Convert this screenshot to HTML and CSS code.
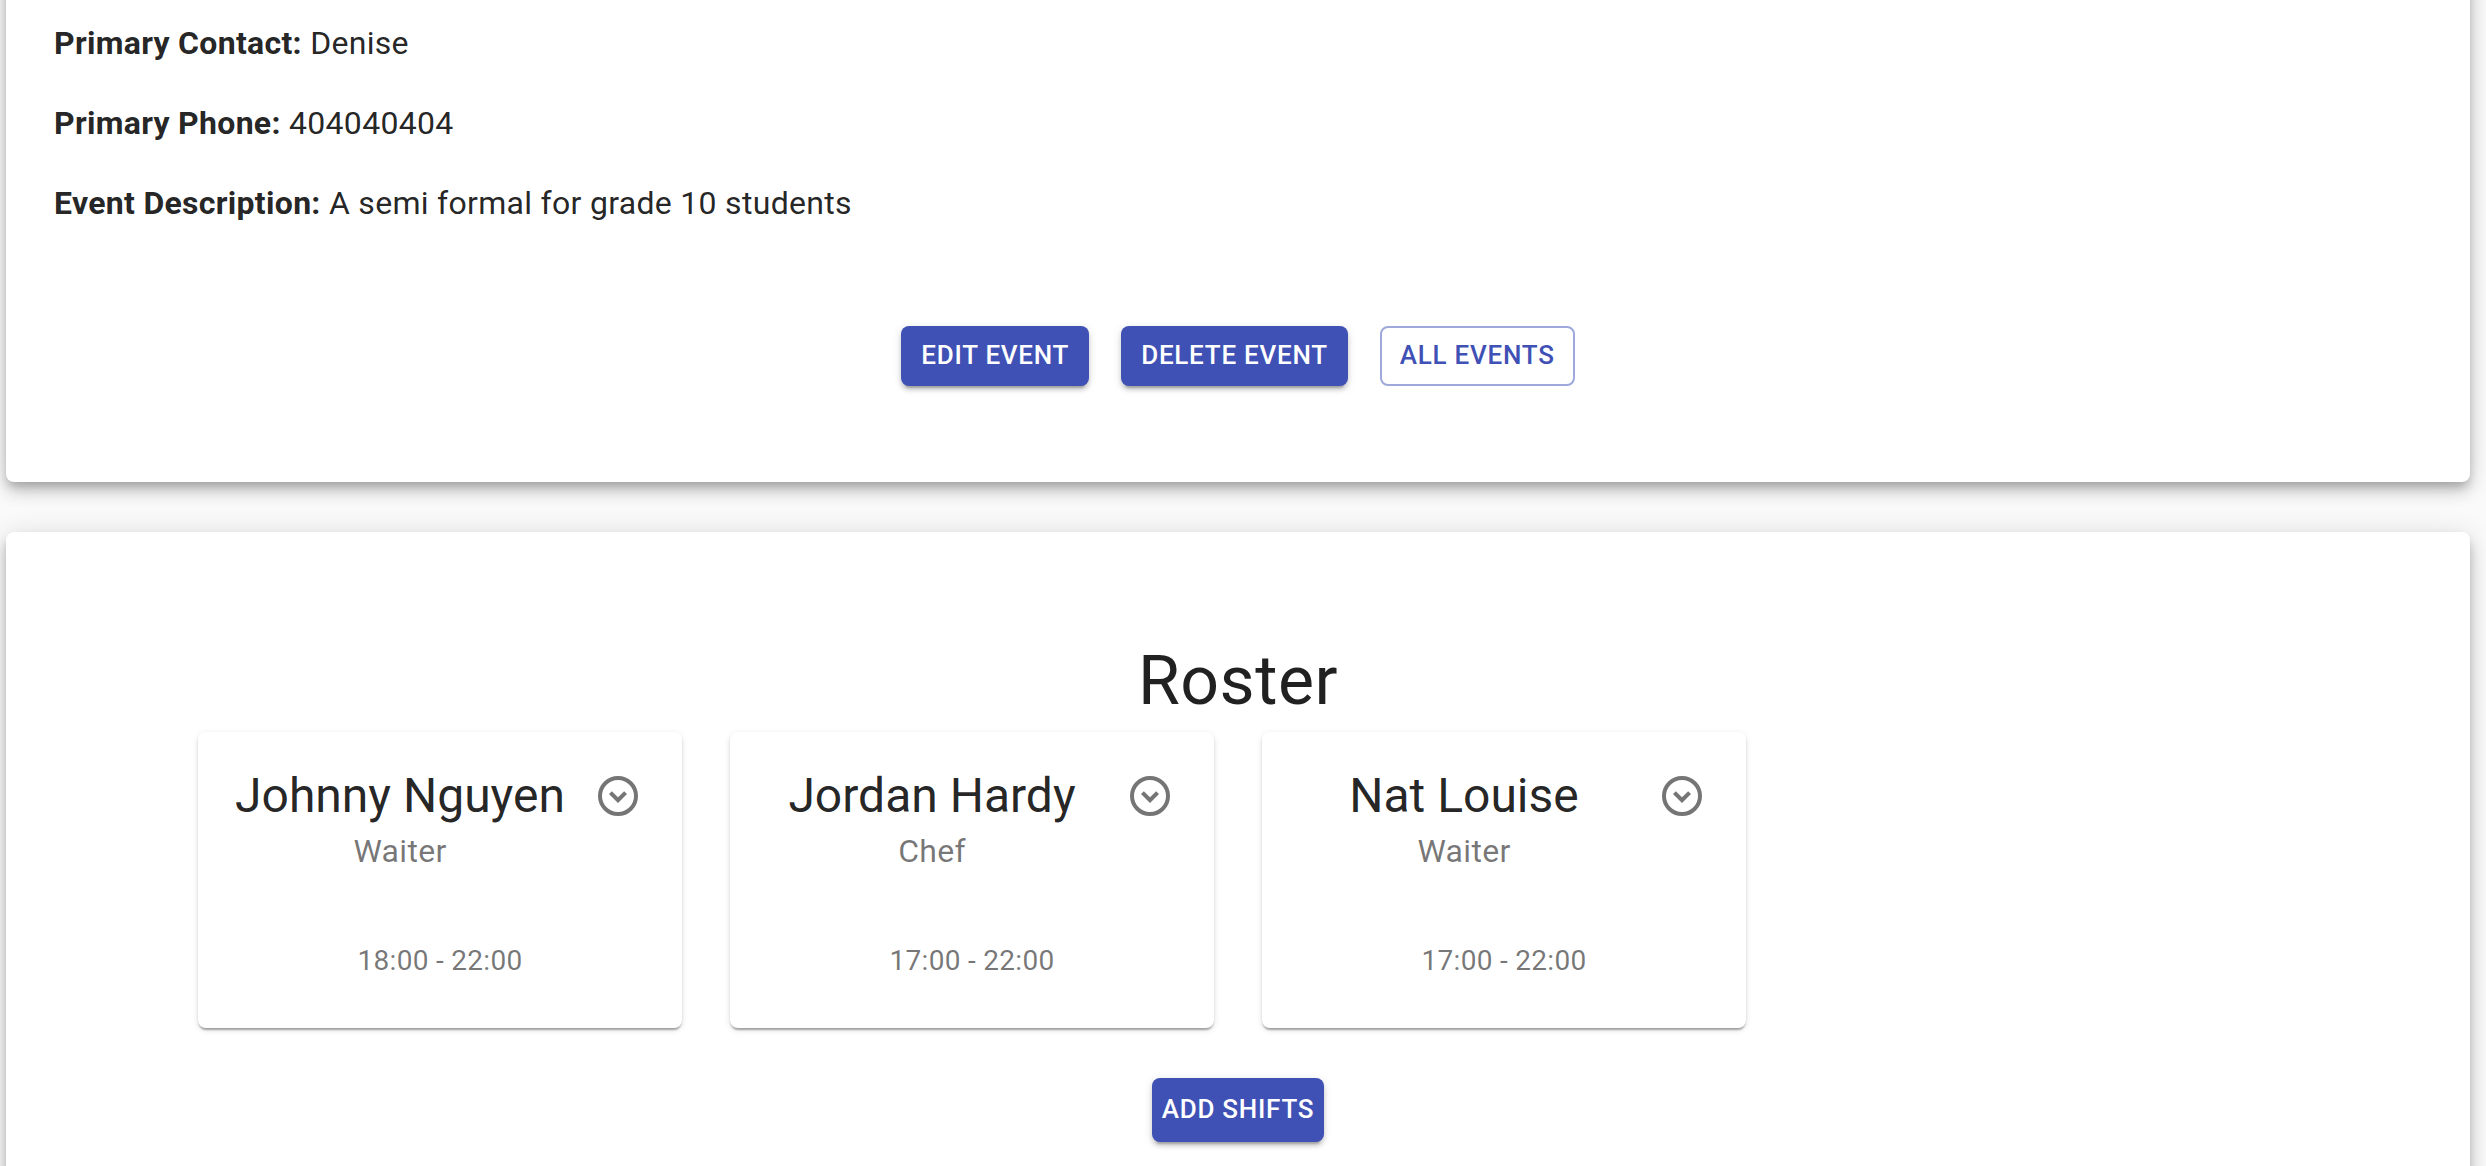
FILE: index.html
```html
<!DOCTYPE html>
<html lang="en">
<head>
<meta charset="utf-8">
<title>Event</title>
<link rel="stylesheet" href="styles.css">
</head>
<body>
<main class="page">
  <section class="paper event">
    <p class="detail"><b>Primary Contact:</b> Denise</p>
    <p class="detail"><b>Primary Phone:</b> 404040404</p>
    <p class="detail"><b>Event Description:</b> A semi formal for grade 10 students</p>
    <div class="actions">
      <button type="button" class="button contained">Edit Event</button>
      <button type="button" class="button contained">Delete Event</button>
      <button type="button" class="button outlined">All Events</button>
    </div>
  </section>
  <section class="paper roster">
    <h1 class="title">Roster</h1>
    <div class="shifts">
      <article class="card">
        <header class="card-header">
          <div class="person">
            <h2 class="name">Johnny Nguyen</h2>
            <p class="role">Waiter</p>
          </div>
          <button type="button" class="icon-button" aria-label="Options for Johnny Nguyen">
            <svg class="icon" viewBox="0 0 24 24" aria-hidden="true"><circle cx="12" cy="12" r="9"/><path d="M15.080 9.590L12 12.670L8.920 9.590L7.500 11L12 15.500L16.500 11z"/></svg>
          </button>
        </header>
        <p class="time">18:00 - 22:00</p>
      </article>
      <article class="card">
        <header class="card-header">
          <div class="person">
            <h2 class="name">Jordan Hardy</h2>
            <p class="role">Chef</p>
          </div>
          <button type="button" class="icon-button" aria-label="Options for Jordan Hardy">
            <svg class="icon" viewBox="0 0 24 24" aria-hidden="true"><circle cx="12" cy="12" r="9"/><path d="M15.080 9.590L12 12.670L8.920 9.590L7.500 11L12 15.500L16.500 11z"/></svg>
          </button>
        </header>
        <p class="time">17:00 - 22:00</p>
      </article>
      <article class="card">
        <header class="card-header">
          <div class="person">
            <h2 class="name">Nat Louise</h2>
            <p class="role">Waiter</p>
          </div>
          <button type="button" class="icon-button" aria-label="Options for Nat Louise">
            <svg class="icon" viewBox="0 0 24 24" aria-hidden="true"><circle cx="12" cy="12" r="9"/><path d="M15.080 9.590L12 12.670L8.920 9.590L7.500 11L12 15.500L16.500 11z"/></svg>
          </button>
        </header>
        <p class="time">17:00 - 22:00</p>
      </article>
    </div>
    <button type="button" class="button contained add">Add Shifts</button>
  </section>
</main>
</body>
</html>
```
FILE: styles.css
```css
* {
  box-sizing: border-box;
}

body {
  margin: 0;
  background: #fafafa;
  color: rgba(0, 0, 0, 0.87);
  font-family: Roboto, "Liberation Sans", sans-serif;
  font-size: 32px;
  line-height: 48px;
  letter-spacing: 0.00938em;
}

h1, h2, p {
  margin: 0;
  font-weight: 400;
}

.page {
  display: flex;
  flex-direction: column;
  gap: 50px;
  height: 100vh;
  padding: 0 16px 0 6px;
  overflow: hidden;
}

.paper {
  flex: none;
  border-radius: 8px;
  background: #fff;
  box-shadow: 0 6px 10px -2px rgba(0, 0, 0, 0.2), 0 10px 16px rgba(0, 0, 0, 0.14), 0 2px 28px rgba(0, 0, 0, 0.12);
}

/* The top of this panel is scrolled past the window's edge. */
.event {
  display: flex;
  flex-direction: column;
  gap: 32px;
  margin-top: -64px;
  padding: 83px 48px 96px;
}

.event b {
  font-weight: 700;
}

.actions {
  display: flex;
  justify-content: center;
  gap: 32px;
  margin-top: 67px;
}

.button {
  padding: 8px 20px 10px;
  border: 0;
  border-radius: 8px;
  font: 500 26px/42px Roboto, "Liberation Sans", sans-serif;
  letter-spacing: 0.02857em;
  text-transform: uppercase;
  cursor: pointer;
}

.contained {
  background: #3f51b5;
  color: #fff;
  box-shadow: 0 6px 2px -4px rgba(0, 0, 0, 0.2), 0 4px 4px rgba(0, 0, 0, 0.14), 0 2px 10px rgba(0, 0, 0, 0.12);
}

.outlined {
  padding: 6px 18px 8px;
  border: 2px solid rgba(63, 81, 181, 0.5);
  background: transparent;
  color: #3f51b5;
}

.roster {
  display: flex;
  flex-direction: column;
  align-items: center;
  padding: 107px 192px 96px;
}

.title {
  font-size: 68px;
  line-height: 84px;
  letter-spacing: 0.00735em;
}

.shifts {
  display: grid;
  grid-template-columns: repeat(4, 1fr);
  gap: 48px;
  width: 100%;
  margin: 9px 0 50px;
}

.card {
  border-radius: 8px;
  background: #fff;
  box-shadow: 0 4px 2px -2px rgba(0, 0, 0, 0.2), 0 2px 2px rgba(0, 0, 0, 0.14), 0 2px 6px rgba(0, 0, 0, 0.12);
  text-align: center;
}

.card-header {
  display: flex;
  align-items: flex-start;
  padding: 32px 32px 34px;
}

.person {
  flex: 1;
}

.name {
  font-size: 48px;
  line-height: 64px;
  letter-spacing: 0;
  white-space: nowrap;
}

.role {
  color: rgba(0, 0, 0, 0.54);
  line-height: 46px;
}

.icon-button {
  display: flex;
  margin: -16px -16px 0 0;
  padding: 24px;
  border: 0;
  background: transparent;
  color: rgba(0, 0, 0, 0.54);
  cursor: pointer;
}

.icon {
  width: 48px;
  height: 48px;
  fill: currentColor;
}

.icon circle {
  fill: none;
  stroke: currentColor;
  stroke-width: 2;
}

.time {
  padding: 33px 32px 47px;
  color: rgba(0, 0, 0, 0.54);
  font-size: 28px;
  line-height: 40px;
  letter-spacing: 0.01071em;
}

.add {
  padding: 10px 10px 12px;
}
```
